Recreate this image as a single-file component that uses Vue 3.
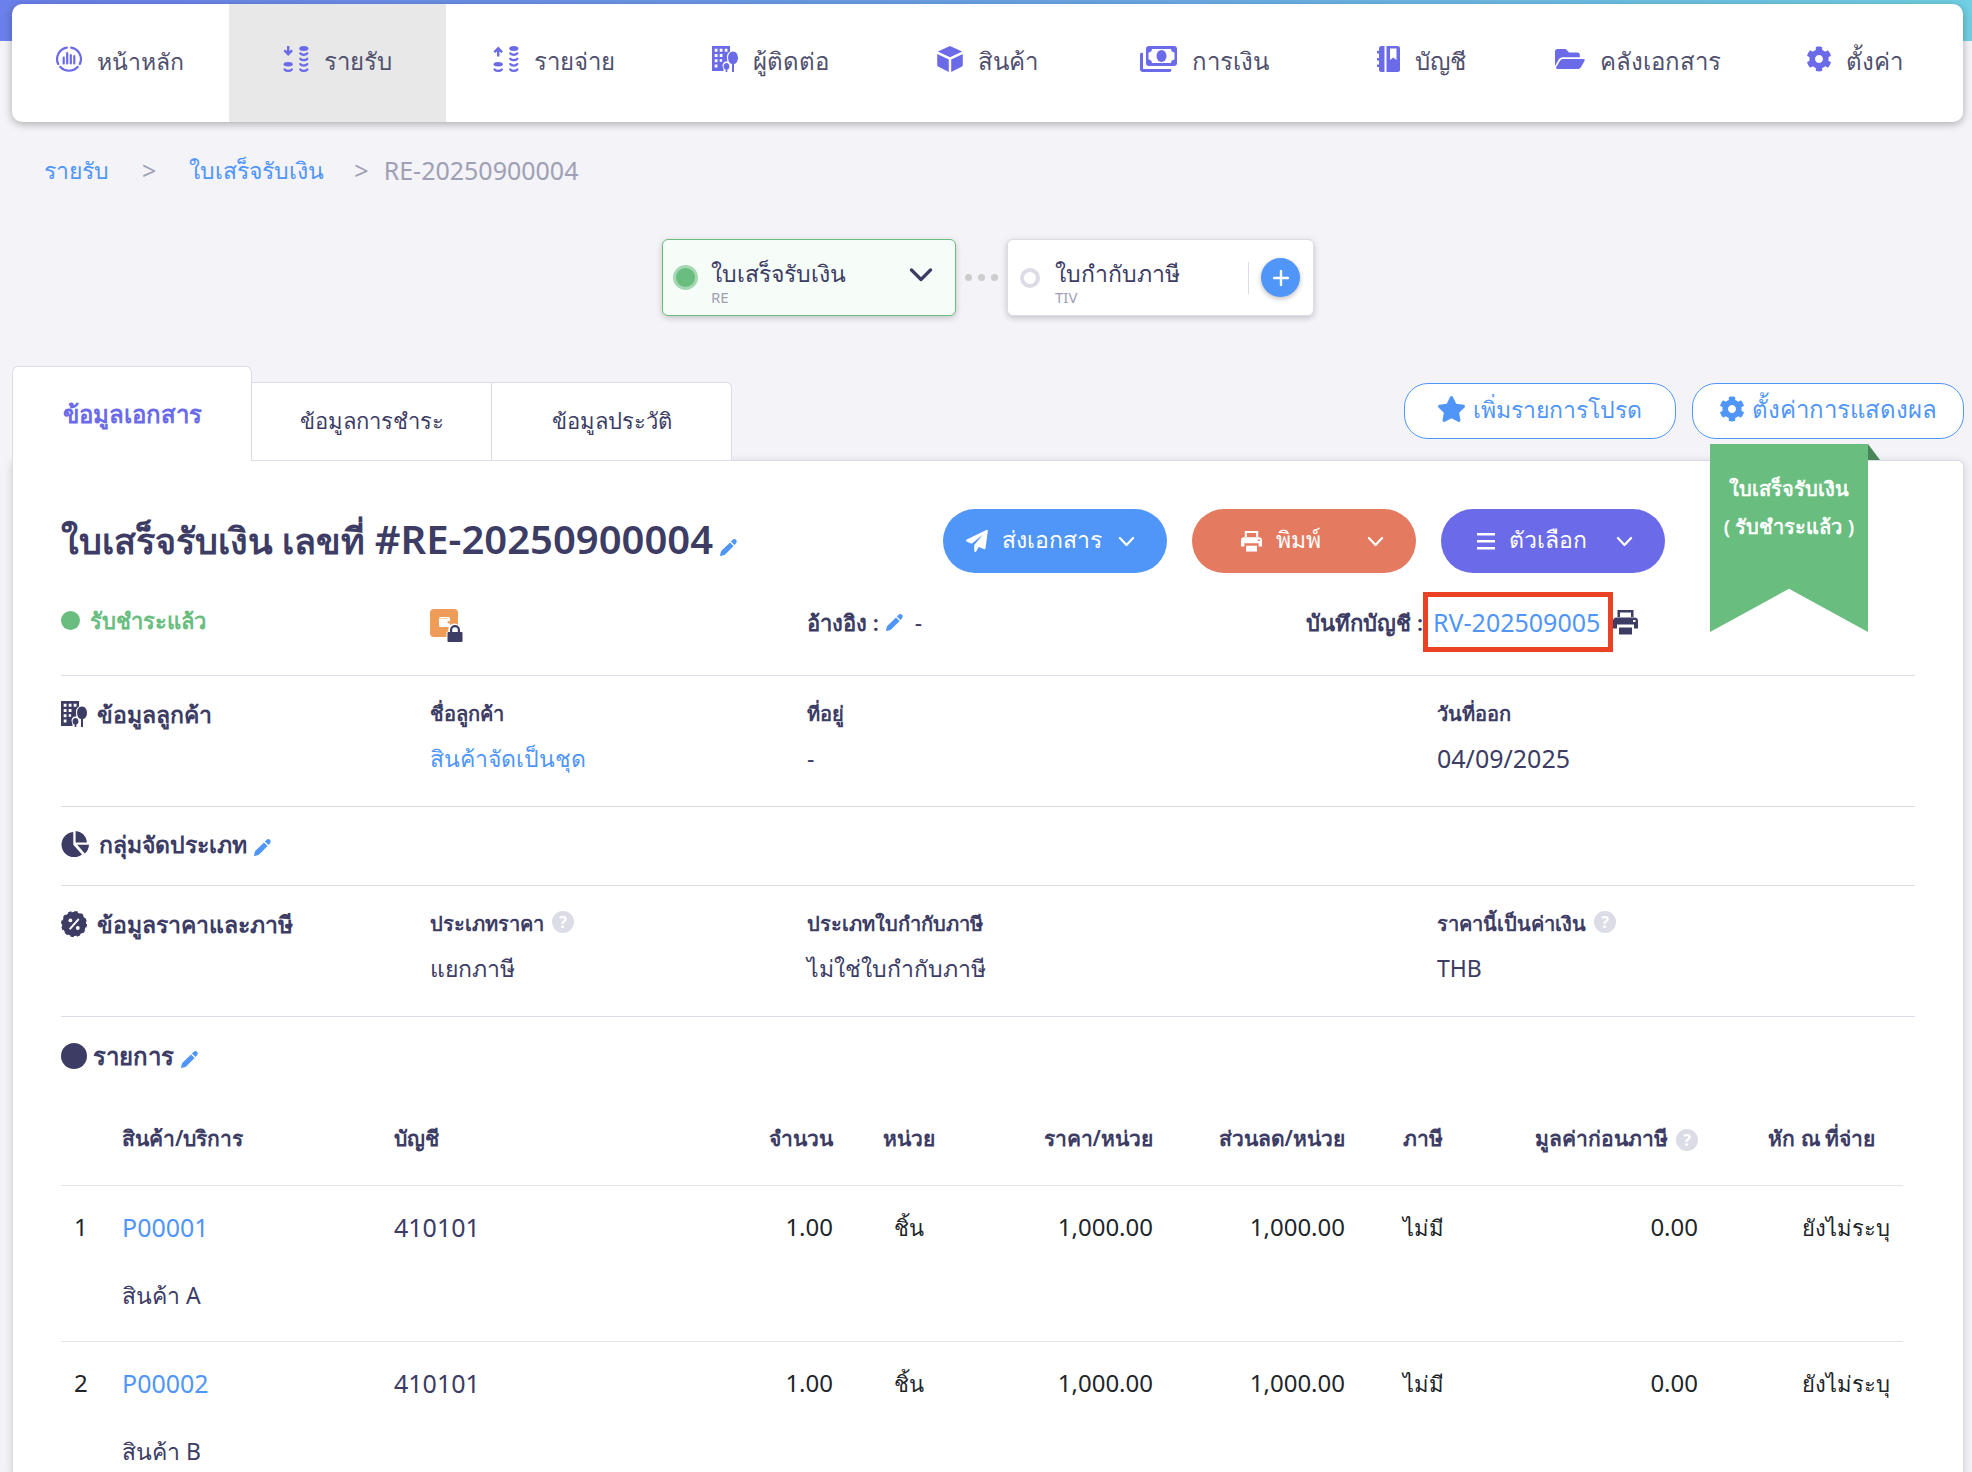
<script setup>
import { h } from 'vue'

const shapes = {
  home: { box: '0 0 26 26', w: 26, h: 26, body: '<g fill="none" stroke="currentColor" stroke-width="2.200" stroke-linecap="round"><path d="M10.800 1.600A11.600 11.600 0 0 0 2.200 18"/><path d="M15.200 1.600A11.600 11.600 0 0 1 23.800 18"/><path d="M4.200 20.800A11.800 11.800 0 0 0 21.800 20.800"/><path d="M7.700 11.500v6M11.200 7v10.500M14.800 9v8.500M18.300 10v7.500"/></g>' },
  income: { box: '0 0 26 26', w: 26, h: 26, body: '<path d="M4 0h2.400v5l2-1.600 1.600 1.600-4.800 5L.4 5 2 3.400l2 1.600z"/><ellipse cx="5.200" cy="18.200" rx="4.600" ry="2.200"/><ellipse cx="20.800" cy="2.600" rx="4.600" ry="2.500"/><g fill="none" stroke="currentColor" stroke-width="2.200" stroke-linecap="round"><path d="M1.600 23.400c1.800 2 5.400 2 7.200 0M17.200 7.300c1.800 2 5.400 2 7.200 0M17.200 12.700c1.800 2 5.400 2 7.200 0M17.200 18.100c1.800 2 5.400 2 7.200 0M17.200 23.400c1.800 2 5.400 2 7.200 0"/></g>' },
  expense: { box: '0 0 26 26', w: 26, h: 26, body: '<path d="M4 10.500h2.400v-5l2 1.600 1.600-1.600L5.200.5.4 5.500 2 7.100l2-1.600z"/><ellipse cx="5.200" cy="18.200" rx="4.600" ry="2.200"/><ellipse cx="20.800" cy="2.600" rx="4.600" ry="2.500"/><g fill="none" stroke="currentColor" stroke-width="2.200" stroke-linecap="round"><path d="M1.600 23.400c1.800 2 5.400 2 7.200 0M17.200 7.300c1.800 2 5.400 2 7.200 0M17.200 12.700c1.800 2 5.400 2 7.200 0M17.200 18.100c1.800 2 5.400 2 7.200 0M17.200 23.400c1.800 2 5.400 2 7.200 0"/></g>' },
  contact: { box: '0 0 26 26', w: 26, h: 26, body: '<path fill-rule="evenodd" d="M0 0h18v5.500a6.500 6.500 0 0 0-3 6.500l.3 3.500a4 4 0 0 0-4.500 5.500l.7 2.500V25H0zM2.700 2.700v3h2.800v-3zM7.700 2.700v3h2.800v-3zM12.700 2.700v3h2.800v-3zM2.700 8v3h2.800V8zM7.700 8v3h2.800V8zM2.700 13.300v3h2.800v-3zM7.700 13.300v2.400h2.400v-2.400zM2.700 18.600v3h2.800v-3z"/><path d="M21 5.500c3.200 0 5 2.900 5 6.400s-1.800 5.600-4 6.200V26h-2v-7.900c-2.200-.6-3.900-2.700-3.900-6.200s1.700-6.400 4.900-6.400z"/><path d="M14.500 17c1.800 0 2.900 1.500 2.900 3.400 0 1.600-.8 2.800-2.100 3.200V26h-1.600v-2.400c-1.300-.4-2.100-1.600-2.100-3.200 0-1.900 1.100-3.400 2.900-3.400z"/>' },
  cube: { box: '0 0 26 26', w: 26, h: 26, body: '<path d="M13 0l12.200 5.400L13 11.300.8 5.400zM.2 8l11.600 5.600V26L1 20.400a1.500 1.500 0 0 1-.8-1.300zM25.800 8l-11.600 5.600V26L25 20.400a1.500 1.500 0 0 0 .8-1.300z"/>' },
  money: { box: '0 0 37 26', w: 37, h: 26, body: '<path fill-rule="evenodd" d="M9 0h25a3 3 0 0 1 3 3v14a3 3 0 0 1-3 3H9a3 3 0 0 1-3-3V3a3 3 0 0 1 3-3zM12 3a4 4 0 0 1-3.500 3.500v7A4 4 0 0 1 12 17h19a4 4 0 0 1 3.500-3.500v-7A4 4 0 0 1 31 3z"/><ellipse cx="21.500" cy="10" rx="5" ry="6"/><path d="M0 9a2 2 0 0 1 3-2v16h28a2 2 0 0 1-2 3H3a3 3 0 0 1-3-3z"/>' },
  book: { box: '0 0 23 26', w: 23, h: 26, body: '<path fill-rule="evenodd" d="M4.500 0H7.500v26H4.500a2.500 2.500 0 0 1-2.500-2.500V21H0v-2.500h2V14.500H0V12h2V7.500H0V5h2V2.500A2.500 2.500 0 0 1 4.500 0zM9.500 0H20.500A2.500 2.500 0 0 1 23 2.500v21a2.500 2.500 0 0 1-2.500 2.500H9.500zM13 2.500V14l3.200-2.500L19.500 14V2.500z"/>' },
  folder: { box: '0 48 580 416', w: 30, h: 22, body: '<path d="M572.694 292.093L500.27 416.248A63.997 63.997 0 0 1 444.989 448H45.025c-18.523 0-30.064-20.093-20.731-36.093l72.424-124.155A64 64 0 0 1 152 256h399.964c18.523 0 30.064 20.093 20.730 36.093zM152 224h328v-48c0-26.510-21.490-48-48-48H272l-64-64H48C21.490 64 0 85.490 0 112v278.046l69.077-118.418C86.214 242.250 117.989 224 152 224z"/>' },
  gear: { box: '16 8 480 496', w: 24, h: 26, body: '<path d="M487.400 315.700l-42.600-24.600c4.300-23.200 4.300-47 0-70.200l42.600-24.600c4.900-2.800 7.100-8.600 5.500-14-11.100-35.600-30-67.800-54.700-94.600-3.800-4.100-10-5.100-14.800-2.300L380.800 110c-17.900-15.400-38.500-27.300-60.800-35.100V25.800c0-5.600-3.900-10.500-9.400-11.700-36.700-8.200-74.300-7.800-109.200 0-5.500 1.200-9.400 6.100-9.400 11.700V75c-22.200 7.900-42.800 19.800-60.800 35.100L88.700 85.500c-4.900-2.800-11-1.900-14.800 2.300-24.700 26.700-43.600 58.900-54.700 94.600-1.700 5.400.6 11.200 5.500 14L67.300 221c-4.300 23.200-4.300 47 0 70.200l-42.600 24.600c-4.900 2.800-7.100 8.600-5.500 14 11.100 35.600 30 67.800 54.700 94.600 3.800 4.100 10 5.100 14.800 2.300l42.600-24.600c17.900 15.400 38.500 27.300 60.800 35.100v49.200c0 5.600 3.900 10.500 9.400 11.700 36.700 8.200 74.300 7.800 109.200 0 5.500-1.200 9.400-6.100 9.400-11.700v-49.200c22.200-7.900 42.800-19.800 60.800-35.100l42.600 24.600c4.900 2.800 11 1.900 14.800-2.300 24.700-26.700 43.600-58.900 54.700-94.600 1.500-5.500-.7-11.300-5.600-14.100zM256 336c-44.100 0-80-35.900-80-80s35.900-80 80-80 80 35.900 80 80-35.900 80-80 80z"/>' },
  star: { box: '20 0 536 512', w: 27, h: 26, body: '<path d="M259.300 17.800L194 150.200 47.900 171.500c-26.200 3.800-36.700 36.100-17.700 54.600l105.700 103-25 145.500c-4.500 26.300 23.200 46 46.400 33.700L288 439.600l130.700 68.700c23.200 12.200 50.900-7.400 46.400-33.700l-25-145.500 105.700-103c19-18.500 8.500-50.800-17.700-54.600L382 150.200 316.700 17.800c-11.700-23.600-45.600-23.900-57.400 0z"/>' },
  pencil: { box: '0 0 17 17', w: 17, h: 17, body: '<path d="M10 3.400l3.600 3.600-8.200 8.300c-.6.600-1.200.9-2 1L.6 17c-.4 0-.6-.2-.6-.6l.7-2.800c.1-.8.400-1.400 1-2zM10.900 2.500L12.400 1c1.200-1.200 2.700-1.200 3.600-.2s1 2.400-.1 3.600L14.500 6.100z"/>' },
  send: { box: '0 0 22 22', w: 22, h: 22, body: '<path d="M21.900.8L19.500 18.200c-.1.800-.9 1.200-1.600.9l-5.200-2.200-2.400 4.400c-.6 1.200-2.100.8-2.100-.5V15L17 4.500 5.700 13.800.8 11.700c-1-.5-1.100-1.700-.1-2.200L20.300.1c.9-.4 1.700 0 1.600.7z"/>' },
  print: { box: '0 0 25 25', w: 25, h: 25, body: '<path fill-rule="evenodd" d="M4.500 0h16v7h-16zM7 2.500V7h11V2.500z"/><path fill-rule="evenodd" d="M3.500 7.500h18A3.500 3.500 0 0 1 25 11v7.500h-4v-4H4v4H0V11a3.500 3.500 0 0 1 3.500-3.500zM20 10v2h2.500v-2z"/><path d="M6 17.500h13v7H6z"/>' },
  menu: { box: '0 0 18 18', w: 18, h: 18, body: '<path d="M0 1h18v2.400H0zM0 8h18v2.400H0zM0 15h18v2.400H0z"/>' },
  chevron: { box: '0 0 18 12', w: 17, h: 11, body: '<path d="M1.800 2.200L9 9.800l7.200-7.600" fill="none" stroke="currentColor" stroke-width="2.400" stroke-linecap="round" stroke-linejoin="round"/>' },
  arrow: { box: '0 0 24 14', w: 24, h: 14, body: '<path d="M2.500 2l9.500 9.500L21.500 2" fill="none" stroke="currentColor" stroke-width="3.200" stroke-linecap="round" stroke-linejoin="round"/>' },
  plus: { box: '0 0 16 16', w: 16, h: 16, body: '<path d="M8 1v14M1 8h14" stroke="currentColor" stroke-width="2.400" stroke-linecap="round"/>' },
  pie: { box: '0 0 28 26', w: 28, h: 26, body: '<path d="M12.300 1v12.800l8.700 9.600A12.600 12.600 0 1 1 12.300 1z"/><path d="M14.600 0A12.200 12.200 0 0 1 26 11.500H14.600zM16.200 13.800H28a12.200 12.200 0 0 1-4.200 8.700z"/>' },
  percent: { box: '0 0 26 26', w: 26, h: 26, body: '<circle cx="13" cy="13" r="12"/><circle cx="13" cy="13" r="12" fill="none" stroke="currentColor" stroke-width="2" stroke-dasharray="3.400 2.880"/><path d="M9.200 17.600l8-9" stroke="#fff" stroke-width="2" stroke-linecap="round"/><circle cx="9.400" cy="9.400" r="1.900" fill="#fff"/><circle cx="16.800" cy="17" r="1.900" fill="#fff"/>' },
  dot: { box: '0 0 26 26', w: 26, h: 26, body: '<circle cx="13" cy="13" r="13"/>' },
  lockbox: { box: '0 0 33 33', w: 33, h: 33, body: '<rect width="28" height="28" rx="4" fill="#f09c59"/><rect x="9" y="8" width="11" height="10" rx="1.500" fill="#fff"/><path d="M9.500 9.500h8" stroke="#f7c9a0" stroke-width=".8"/><rect x="17.500" y="12" width="2.500" height="2.500" rx="1" fill="#f09c59"/><path d="M16.500 33v-9.500l1.800-1.500v-1.500a6 6 0 0 1 12 0V22l2.700 1v10z" fill="#fff"/><path fill="#3c3c64" fill-rule="evenodd" d="M18.500 23h1.500v-2a5 5 0 0 1 10 0v2h1.500a1 1 0 0 1 1 1v8a1 1 0 0 1-1 1h-13a1 1 0 0 1-1-1v-8a1 1 0 0 1 1-1zM22.200 23h5.600v-2a2.800 2.800 0 0 0-5.600 0z"/>' },
}

const Icon = (props) => {
  const s = shapes[props.name]
  return h('svg', { viewBox: s.box, width: props.size || s.w, height: props.size || s.h, fill: 'currentColor', 'aria-hidden': 'true', innerHTML: s.body })
}
Icon.props = ['name', 'size']

const nav = [
  { icon: 'home', label: 'หน้าหลัก' },
  { icon: 'income', label: 'รายรับ', active: true },
  { icon: 'expense', label: 'รายจ่าย' },
  { icon: 'contact', label: 'ผู้ติดต่อ' },
  { icon: 'cube', label: 'สินค้า' },
  { icon: 'money', label: 'การเงิน' },
  { icon: 'book', label: 'บัญชี' },
  { icon: 'folder', label: 'คลังเอกสาร' },
  { icon: 'gear', label: 'ตั้งค่า' },
]

const rows = [
  { no: 1, code: 'P00001', name: 'สินค้า A' },
  { no: 2, code: 'P00002', name: 'สินค้า B' },
]
</script>

<template>
  <div class="page">
    <header class="top">
      <nav class="nav">
        <a v-for="n in nav" :key="n.label" href="#" class="nav-item" :class="{ active: n.active }">
          <Icon :name="n.icon" /><span>{{ n.label }}</span>
        </a>
      </nav>
    </header>

    <div class="crumbs">
      <a href="#">รายรับ</a><span class="sep">&gt;</span>
      <a href="#">ใบเสร็จรับเงิน</a><span class="sep last">&gt;</span>
      <span class="latin">RE-20250900004</span>
    </div>

    <div class="flow">
      <button class="step current">
        <span class="bullet on"></span>
        <span class="step-text"><span class="step-name">ใบเสร็จรับเงิน</span><small>RE</small></span>
        <Icon name="arrow" />
      </button>
      <div class="dots"><i></i><i></i><i></i></div>
      <div class="step">
        <span class="bullet"></span>
        <span class="step-text"><span class="step-name">ใบกำกับภาษี</span><small>TIV</small></span>
        <span class="rule"></span>
        <button class="add" aria-label="เพิ่ม"><Icon name="plus" /></button>
      </div>
    </div>

    <div class="tabbar">
      <div class="tabs">
        <button class="tab selected">ข้อมูลเอกสาร</button>
        <button class="tab">ข้อมูลการชำระ</button>
        <button class="tab end">ข้อมูลประวัติ</button>
      </div>
      <div class="tools">
        <button class="outline"><Icon name="star" />เพิ่มรายการโปรด</button>
        <button class="outline"><Icon name="gear" />ตั้งค่าการแสดงผล</button>
      </div>
    </div>

    <main class="card">
      <div class="ribbon">
        <div class="ribbon-body">ใบเสร็จรับเงิน<br />( รับชำระแล้ว )</div>
        <div class="fold"></div>
      </div>

      <div class="title-row">
        <h1>ใบเสร็จรับเงิน เลขที่ <span>#RE-20250900004</span></h1>
        <a href="#" class="edit" aria-label="แก้ไข"><Icon name="pencil" /></a>
        <div class="actions">
          <button class="pill blue"><Icon name="send" /><span>ส่งเอกสาร</span><Icon name="chevron" /></button>
          <button class="pill coral"><Icon name="print" size="21" /><span>พิมพ์</span><Icon name="chevron" /></button>
          <button class="pill violet"><Icon name="menu" /><span>ตัวเลือก</span><Icon name="chevron" /></button>
        </div>
      </div>

      <div class="status-row">
        <div class="status"><i></i>รับชำระแล้ว</div>
        <div class="lock"><Icon name="lockbox" /></div>
        <div class="ref"><b>อ้างอิง :</b><a href="#" class="edit" aria-label="แก้ไข"><Icon name="pencil" /></a><span>-</span></div>
        <div class="journal"><b>บันทึกบัญชี :</b><a href="#" class="voucher latin">RV-202509005</a><Icon name="print" /></div>
      </div>

      <section class="info">
        <h2><Icon name="contact" />ข้อมูลลูกค้า</h2>
        <div><h3>ชื่อลูกค้า</h3><p><a href="#">สินค้าจัดเป็นชุด</a></p></div>
        <div><h3>ที่อยู่</h3><p>-</p></div>
        <div><h3>วันที่ออก</h3><p class="latin">04/09/2025</p></div>
      </section>

      <section class="info slim">
        <h2><Icon name="pie" />กลุ่มจัดประเภท<a href="#" class="edit" aria-label="แก้ไข"><Icon name="pencil" /></a></h2>
      </section>

      <section class="info">
        <h2><Icon name="percent" />ข้อมูลราคาและภาษี</h2>
        <div><h3>ประเภทราคา<span class="help">?</span></h3><p>แยกภาษี</p></div>
        <div><h3>ประเภทใบกำกับภาษี</h3><p>ไม่ใช่ใบกำกับภาษี</p></div>
        <div><h3>ราคานี้เป็นค่าเงิน<span class="help">?</span></h3><p>THB</p></div>
      </section>

      <section class="items">
        <h2><Icon name="dot" />รายการ<a href="#" class="edit" aria-label="แก้ไข"><Icon name="pencil" /></a></h2>
        <table>
          <colgroup>
            <col class="c-no" /><col class="c-product" /><col class="c-account" /><col class="c-qty" /><col class="c-unit" />
            <col class="c-price" /><col class="c-discount" /><col class="c-tax" /><col class="c-pretax" /><col class="c-wht" />
          </colgroup>
          <thead>
            <tr>
              <th></th>
              <th>สินค้า/บริการ</th>
              <th>บัญชี</th>
              <th class="num">จำนวน</th>
              <th class="unit">หน่วย</th>
              <th class="num">ราคา/หน่วย</th>
              <th class="num">ส่วนลด/หน่วย</th>
              <th class="tax">ภาษี</th>
              <th class="num">มูลค่าก่อนภาษี<span class="help">?</span></th>
              <th class="num wht">หัก ณ ที่จ่าย</th>
            </tr>
          </thead>
          <tbody>
            <tr v-for="r in rows" :key="r.no">
              <td class="no amount">{{ r.no }}</td>
              <td class="ink"><a href="#" class="latin">{{ r.code }}</a><div class="name">{{ r.name }}</div></td>
              <td class="ink latin">410101</td>
              <td class="num amount">1.00</td>
              <td class="unit">ชิ้น</td>
              <td class="num amount">1,000.00</td>
              <td class="num amount">1,000.00</td>
              <td class="tax">ไม่มี</td>
              <td class="num amount">0.00</td>
              <td class="num wht">ยังไม่ระบุ</td>
            </tr>
          </tbody>
        </table>
      </section>
    </main>
  </div>
</template>

<style>
body {
  background: #f3f3f8;
}
</style>

<style scoped>
.page {
  font-family: "Noto Sans", "Open Sans", sans-serif;
  font-size: 23px;
  line-height: 36px;
  color: #3c3c64;
  overflow: hidden;
}
.page * {
  box-sizing: border-box;
}
.page svg {
  display: block;
  flex: none;
}
.page .latin {
  font-size: 25px;
}
a {
  color: #5096f8;
  text-decoration: none;
}
button {
  font: inherit;
  color: inherit;
  cursor: pointer;
}
h1,
h2,
h3,
p {
  margin: 0;
}
.top {
  padding: 4px 9px 0 12px;
  background: linear-gradient(90deg, #6b80ea, #6ba3e6 50%, #70d0e4) no-repeat 0 0 / 100% 41px;
}
.nav {
  display: flex;
  height: 118px;
  border-radius: 10px;
  overflow: hidden;
  background: #fff;
  box-shadow: 0 2px 8px rgba(0, 0, 0, 0.3);
}
.nav-item {
  flex: 1 1 0;
  display: flex;
  align-items: center;
  justify-content: center;
  gap: 15px;
  padding-bottom: 8px;
  color: #6b6bea;
  font-size: 24px;
  white-space: nowrap;
}
.nav-item:first-child {
  font-size: 23px;
}
.nav-item.active {
  background: #e8e8e8;
}
.nav-item span {
  padding-top: 4px;
  color: #50506e;
}
.crumbs {
  display: flex;
  align-items: center;
  margin: 30px 44px 0;
  color: #a0a0b4;
}
.sep {
  margin: 0 33px;
  font-size: 25px;
}
.sep.last {
  margin: 0 15px 0 30px;
}
.flow {
  display: flex;
  justify-content: center;
  align-items: center;
  margin-top: 51px;
  padding-left: 4px;
}
.step {
  display: flex;
  align-items: center;
  width: 307px;
  height: 77px;
  padding: 0 13px 0 12px;
  border: 1px solid #dcdce6;
  border-radius: 6px;
  background: #fff;
  box-shadow: 0 2px 6px rgba(0, 0, 0, 0.2);
}
.step.current {
  width: 294px;
  padding: 0 22px 0 10px;
  border-color: #69be7f;
  background: #f6fcf8;
  text-align: left;
}
.step.current svg {
  margin-bottom: 6px;
}
.step-text {
  flex: 1;
  display: flex;
  flex-direction: column;
  padding-top: 4px;
  white-space: nowrap;
}
.step-name {
  line-height: 34px;
}
.step small {
  font-size: 15px;
  line-height: 14px;
  color: #a0a0b4;
}
.bullet {
  width: 20px;
  height: 20px;
  margin-right: 15px;
  border: 4px solid #dcdce6;
  border-radius: 50%;
}
.bullet.on {
  width: 25px;
  height: 25px;
  margin-right: 13px;
  border: 3px solid #a5d8b2;
  background: #69be7f;
}
.rule {
  width: 1px;
  height: 32px;
  margin-right: 12px;
  background: #dcdce6;
}
.add {
  display: grid;
  place-items: center;
  width: 39px;
  height: 39px;
  padding: 0;
  border: 0;
  border-radius: 50%;
  background: #5096f8;
  color: #fff;
  box-shadow: 0 2px 5px rgba(0, 0, 0, 0.25);
}
.dots {
  display: flex;
  gap: 6px;
  padding: 0 9px;
}
.dots i {
  width: 7px;
  height: 7px;
  border-radius: 50%;
  background: #cdcdcd;
}
.tabbar {
  display: flex;
  justify-content: space-between;
  align-items: flex-end;
  margin: 50px 8px 0 12px;
}
.tabs {
  display: flex;
  align-items: flex-end;
  position: relative;
  z-index: 1;
  margin-bottom: -1px;
}
.tab {
  width: 240px;
  height: 79px;
  padding: 0 0 4px;
  border: 1px solid #dcdce6;
  border-left: 0;
  background: #fff;
  font-size: 22px;
}
.tab.selected {
  height: 95px;
  padding: 0;
  border-left: 1px solid #dcdce6;
  border-bottom: 0;
  border-radius: 6px 6px 0 0;
  color: #6b6bea;
  font-size: 24px;
  font-weight: 600;
}
.tab.end {
  border-radius: 0 6px 0 0;
}
.tools {
  display: flex;
  gap: 16px;
  margin-bottom: 21px;
}
.outline {
  display: flex;
  align-items: center;
  justify-content: center;
  gap: 8px;
  width: 272px;
  height: 56px;
  padding: 0 0 4px;
  border: 1px solid #5096f8;
  border-radius: 24px;
  background: #fff;
  color: #5096f8;
  white-space: nowrap;
}
.outline:last-child {
  font-size: 24px;
}
.card {
  position: relative;
  margin: 0 8px 0 12px;
  padding: 48px 48px 0;
  border: 1px solid #dcdce6;
  border-bottom: 0;
  border-radius: 0 6px 0 0;
  background: #fff;
  box-shadow: 0 2px 8px rgba(0, 0, 0, 0.16);
}
.ribbon {
  position: absolute;
  top: -17px;
  right: 83px;
  display: flex;
  align-items: flex-start;
}
.ribbon-body {
  width: 158px;
  height: 188px;
  padding-top: 26px;
  background: #69be7f;
  clip-path: polygon(0 0, 100% 0, 100% 100%, 50% 77%, 0 100%);
  color: #fff;
  font-size: 20px;
  font-weight: 600;
  line-height: 38px;
  text-align: center;
  white-space: nowrap;
}
.fold {
  width: 12px;
  height: 16px;
  background: #4a8558;
  clip-path: polygon(0 0, 100% 100%, 0 100%);
}
.title-row {
  display: flex;
  align-items: center;
  padding-right: 250px;
}
h1 {
  font-size: 36px;
  font-weight: 600;
  line-height: 64px;
  white-space: nowrap;
}
h1 span {
  font-size: 40px;
  line-height: 36px;
}
.edit {
  margin-left: 7px;
}
.title-row .edit {
  margin-top: 12px;
}
.actions {
  display: flex;
  gap: 25px;
  margin-left: auto;
}
.pill {
  display: flex;
  align-items: center;
  justify-content: space-between;
  width: 224px;
  height: 64px;
  padding: 0 32px 0 23px;
  border: 0;
  border-radius: 32px;
  color: #fff;
  white-space: nowrap;
}
.pill span {
  flex: 1;
  padding: 0 0 4px 14px;
  text-align: left;
}
.blue {
  background: #5096f8;
}
.coral {
  padding-left: 49px;
  background: #e47a60;
}
.violet {
  padding-left: 36px;
  background: #6b6bea;
}
.status-row {
  display: grid;
  grid-template-columns: 369fr 377fr 480fr 628fr;
  align-items: center;
  height: 60px;
  margin-top: 19px;
  white-space: nowrap;
}
.status {
  display: flex;
  align-items: center;
  gap: 10px;
  padding-bottom: 4px;
  color: #69be7f;
  font-size: 22px;
  font-weight: 600;
}
.status i {
  width: 19px;
  height: 19px;
  border-radius: 50%;
  background: #69be7f;
}
.lock {
  padding-top: 6px;
}
.ref,
.journal {
  display: flex;
  align-items: center;
}
.ref b,
.journal b {
  font-size: 22px;
  font-weight: 600;
}
.ref span {
  margin-left: 12px;
}
.journal {
  justify-content: flex-end;
  padding-right: 277px;
}
.voucher {
  width: 190px;
  height: 60px;
  padding-left: 5px;
  border: 5px solid #eb4226;
  line-height: 50px;
}
.info {
  display: grid;
  grid-template-columns: 369fr 377fr 630fr 478fr;
  padding: 23px 0 30px;
  border-bottom: 1px solid #dcdce6;
  white-space: nowrap;
}
.status-row + .info {
  margin-top: 23px;
  border-top: 1px solid #dcdce6;
}
.info.slim {
  padding: 22px 0 26px;
}
h2,
h3 {
  display: flex;
  align-items: center;
  height: 30px;
  font-weight: 600;
  line-height: 30px;
}
h2 {
  font-size: 23px;
}
h2 > svg {
  margin-right: 10px;
}
h2 .edit {
  margin-top: 6px;
}
h3 {
  font-size: 20px;
}
h3 + p {
  margin-top: 11px;
}
.help {
  display: inline-block;
  width: 22px;
  height: 22px;
  margin-left: 8px;
  border-radius: 50%;
  background: #dcdce6;
  color: #fff;
  font-size: 16px;
  font-weight: 700;
  line-height: 22px;
  text-align: center;
}
h3 .help {
  margin-bottom: 4px;
}
.items {
  padding: 24px 12px 0 0;
}
.items h2 {
  font-size: 24px;
}
.items h2 > svg {
  margin-right: 6px;
}
table {
  width: 100%;
  table-layout: fixed;
  border-collapse: collapse;
  white-space: nowrap;
}
th {
  padding: 54px 0 34px;
  border-bottom: 1px solid #e4e4ea;
  font-size: 21px;
  font-weight: 600;
  line-height: 26px;
  text-align: left;
}
td {
  padding: 23px 0 28px;
  border-bottom: 1px solid #e4e4ea;
  color: #212529;
  font-size: 22px;
  vertical-align: top;
}
tbody tr:last-child td {
  padding-bottom: 8px;
  border-bottom: 0;
}
td.amount {
  font-size: 24px;
}
td.ink {
  color: #3c3c64;
}
td.no {
  padding-left: 13px;
}
.name {
  margin-top: 31px;
  font-size: 23px;
}
.num {
  text-align: right;
}
.unit {
  text-align: center;
}
.tax {
  padding-left: 58px;
}
th.wht {
  padding-right: 28px;
}
td.wht {
  padding-right: 13px;
}
.c-no { width: 61px; }
.c-product { width: 272px; }
.c-account { width: 320px; }
.c-qty { width: 119px; }
.c-unit { width: 152px; }
.c-price { width: 168px; }
.c-discount { width: 192px; }
.c-tax { width: 135px; }
.c-pretax { width: 218px; }
.c-wht { width: 205px; }
</style>
